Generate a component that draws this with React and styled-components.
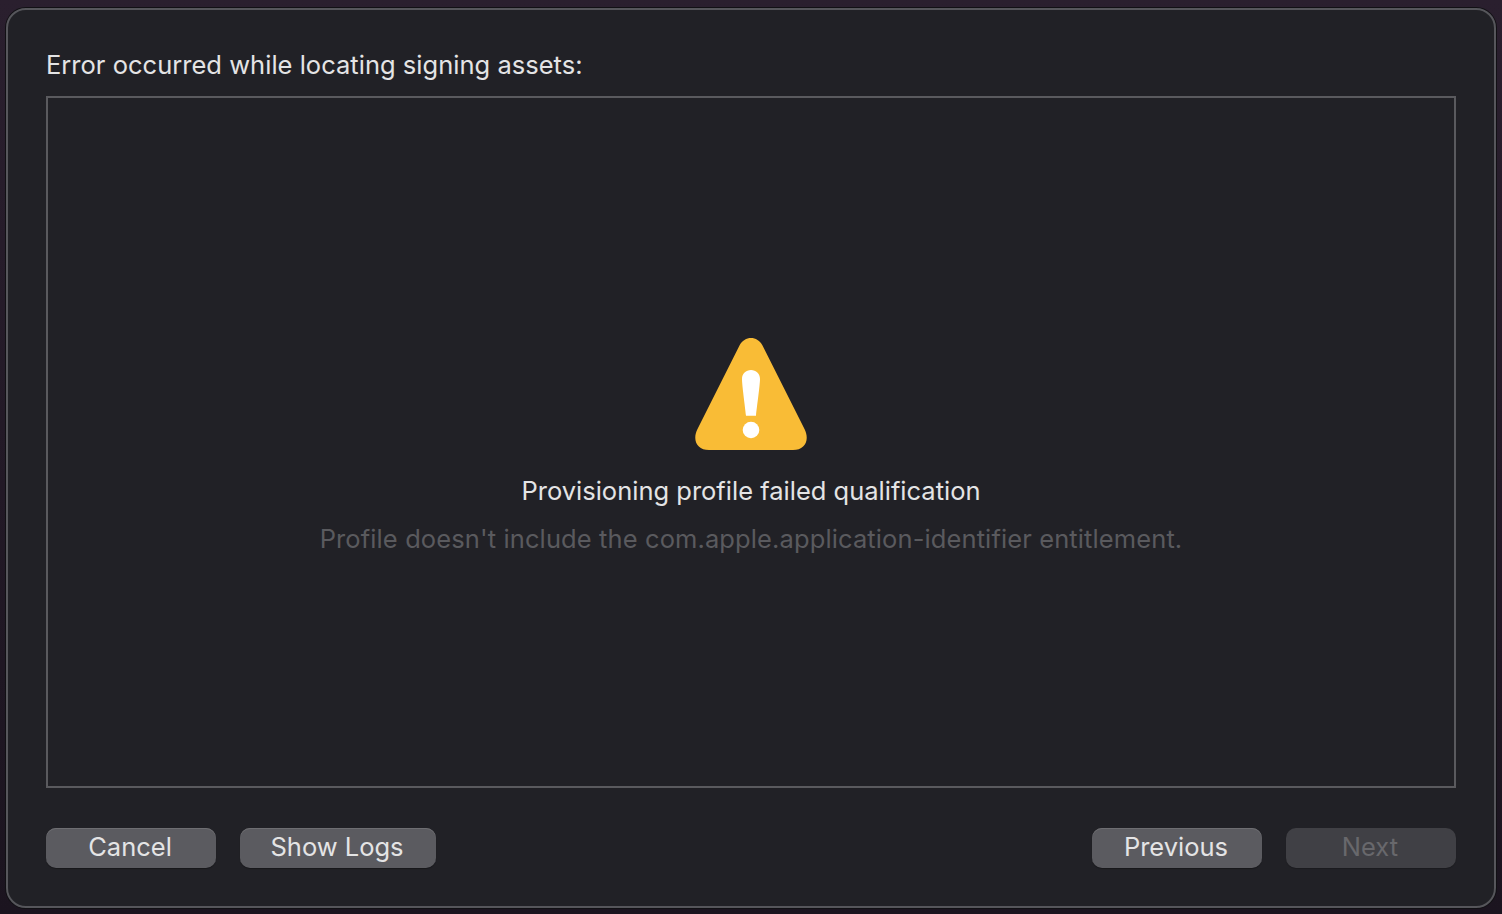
import React from 'react';
import styled, { createGlobalStyle } from 'styled-components';

const GlobalStyle = createGlobalStyle`
  html, body {
    margin: 0;
    padding: 0;
    background: #1c1520;
  }
`;

const Page = styled.div`
  width: 1502px;
  height: 914px;
  box-sizing: border-box;
  padding: 8px 6px 6px;
  background: linear-gradient(180deg, #2a1f2e 0%, #1b141f 100%);
  font-family: Inter, 'Liberation Sans', sans-serif;
  overflow: hidden;
`;

const Sheet = styled.div`
  width: 100%;
  height: 100%;
  box-sizing: border-box;
  padding: 36px 38px 38px;
  display: flex;
  flex-direction: column;
  background: #212126;
  border: 2px solid #56565b;
  border-radius: 20px;
  box-shadow: 0 0 0 1px #111014;
`;

const Heading = styled.div`
  height: 50px;
  line-height: 38px;
  font-size: 25.5px;
  letter-spacing: 0.02px;
  color: #e4e4e5;
`;

const Panel = styled.div`
  height: 692px;
  box-sizing: border-box;
  display: flex;
  flex-direction: column;
  align-items: center;
  padding-top: 240px;
  border: 2px solid #5a5a5e;
`;

const WarningIcon = styled.svg`
  width: 112px;
  height: 112px;
  flex: none;
  overflow: visible;
`;

const Message = styled.div`
  margin-top: 22px;
  line-height: 38px;
  font-size: 25.5px;
  color: #e4e4e5;
`;

const Detail = styled.div`
  margin-top: 10px;
  line-height: 38px;
  font-size: 25.5px;
  letter-spacing: 0.11px;
  color: #5a5a5e;
`;

const Footer = styled.div`
  display: flex;
  justify-content: space-between;
  margin-top: 40px;
`;

const ButtonGroup = styled.div`
  display: flex;
  gap: 24px;
`;

const Button = styled.button`
  width: ${props => props.$width}px;
  height: 40px;
  padding: 0 2px 4px 0;
  border: 0;
  border-radius: 10px;
  font-family: inherit;
  font-size: 25.5px;
  background: ${props => (props.disabled ? '#404045' : '#5b5b60')};
  color: ${props => (props.disabled ? '#68686c' : '#e4e4e5')};
  box-shadow: ${props =>
    props.disabled
      ? '0 1px 1px rgba(0, 0, 0, 0.2)'
      : 'inset 0 1px 0 #6e6e72, 0 1px 1px rgba(0, 0, 0, 0.3)'};
`;

export default function App() {
  return (
    <>
      <GlobalStyle />
      <Page>
        <Sheet>
          <Heading>Error occurred while locating signing assets:</Heading>
          <Panel>
            <WarningIcon viewBox="0 0 112 112">
              <path
                fill="#f9bc36"
                d="M44.5 7.5C49.5 -2.5 62.5 -2.5 67.5 7.5L109.5 91C115 102 110 112 98 112L14 112C2 112 -3 102 2.5 91Z"
              />
              <path
                fill="#fff"
                d="M47 41C47 35.5 51 32 56 32C61 32 65 35.5 65 41C65 47 62 68 61 77.7L51 77.7C50 68 47 47 47 41Z"
              />
              <circle cx="56" cy="92" r="8.3" fill="#fff" />
            </WarningIcon>
            <Message>Provisioning profile failed qualification</Message>
            <Detail>Profile doesn't include the com.apple.application-identifier entitlement.</Detail>
          </Panel>
          <Footer>
            <ButtonGroup>
              <Button $width={170}>Cancel</Button>
              <Button $width={196}>Show Logs</Button>
            </ButtonGroup>
            <ButtonGroup>
              <Button $width={170}>Previous</Button>
              <Button $width={170} disabled>Next</Button>
            </ButtonGroup>
          </Footer>
        </Sheet>
      </Page>
    </>
  );
}
